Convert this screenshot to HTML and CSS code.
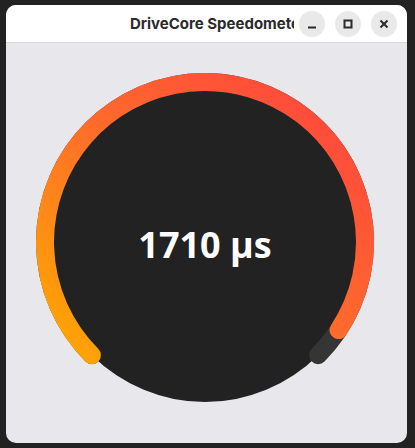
FILE: index.html
```html
<!DOCTYPE html>
<html lang="en">
<head>
<meta charset="utf-8">
<title>DriveCore Speedometer</title>
<link rel="stylesheet" href="styles.css">
</head>
<body>
<div class="window">
  <header class="titlebar">
    <div class="title">DriveCore Speedometer</div>
    <div class="controls">
      <button class="ctl" aria-label="Minimize">
        <svg width="12" height="12" viewBox="0 0 12 12"><path d="M2 9.5H10" stroke="#2b2b2b" stroke-width="2"/></svg>
      </button>
      <button class="ctl" aria-label="Maximize">
        <svg width="12" height="12" viewBox="0 0 12 12"><rect x="2.5" y="2.5" width="7" height="7" fill="none" stroke="#2b2b2b" stroke-width="2"/></svg>
      </button>
      <button class="ctl" aria-label="Close">
        <svg width="12" height="12" viewBox="0 0 12 12"><path d="M2.5 2.5L9.5 9.5M9.5 2.5L2.5 9.5" stroke="#2b2b2b" stroke-width="2"/></svg>
      </button>
    </div>
  </header>
  <main class="content">
    <div class="gauge">
      <svg class="gauge-svg" width="340" height="340" viewBox="0 0 340 340">
        <defs>
          <linearGradient id="arcGrad" x1="0" y1="1" x2="1" y2="0">
            <stop offset="0" stop-color="#ffaa00"/>
            <stop offset="0.5" stop-color="#ff6b2b"/>
            <stop offset="1" stop-color="#ff4040"/>
          </linearGradient>
        </defs>
        <circle cx="170" cy="170" r="160" fill="#222222"/>
        <path d="M56.863 283.137 A160 160 0 1 1 283.137 283.137" fill="none" stroke="#353535" stroke-width="18" stroke-linecap="round"/>
        <path d="M56.863 283.137 A160 160 0 1 1 303.57 258.08" fill="none" stroke="url(#arcGrad)" stroke-width="18" stroke-linecap="round"/>
      </svg>
      <div class="readout">1710 µs</div>
    </div>
  </main>
</div>
</body>
</html>
```

FILE: styles.css
```css
* { box-sizing: border-box; }

html, body {
  margin: 0;
  padding: 0;
  background: #222222;
}

body {
  width: 415px;
  height: 448px;
  overflow: hidden;
}

.window {
  margin: 5px 0 0 6px;
  width: 401px;
  height: 438px;
  border-radius: 10px;
  overflow: hidden;
  background: #e8e7ec;
  display: flex;
  flex-direction: column;
}

.titlebar {
  height: 38px;
  flex: none;
  background: #ffffff;
  border-bottom: 1px solid #d6d6db;
  display: flex;
  align-items: center;
  padding: 0 10px 0 124px;
}

.title {
  flex: 1;
  min-width: 0;
  overflow: hidden;
  white-space: nowrap;
  font-family: Inter, "Liberation Sans", sans-serif;
  font-weight: 700;
  font-size: 15px;
  color: #2b2b2b;
}

.controls {
  display: flex;
  gap: 10px;
  margin-left: 5px;
}

.ctl {
  width: 26px;
  height: 26px;
  border: none;
  border-radius: 50%;
  background: #e9e9e9;
  padding: 0;
  display: flex;
  align-items: center;
  justify-content: center;
}

.ctl svg { display: block; }

.content {
  flex: 1;
  display: flex;
  align-items: center;
  justify-content: center;
  padding: 0 3px 2px 0;
}

.gauge {
  display: grid;
  place-items: center;
  width: 340px;
  height: 340px;
}

.gauge-svg,
.readout {
  grid-area: 1 / 1;
}

.gauge-svg { display: block; }

.readout {
  font-family: "Open Sans", "Noto Sans", sans-serif;
  font-weight: 700;
  font-size: 36px;
  color: #ffffff;
  padding-top: 5px;
}
```
